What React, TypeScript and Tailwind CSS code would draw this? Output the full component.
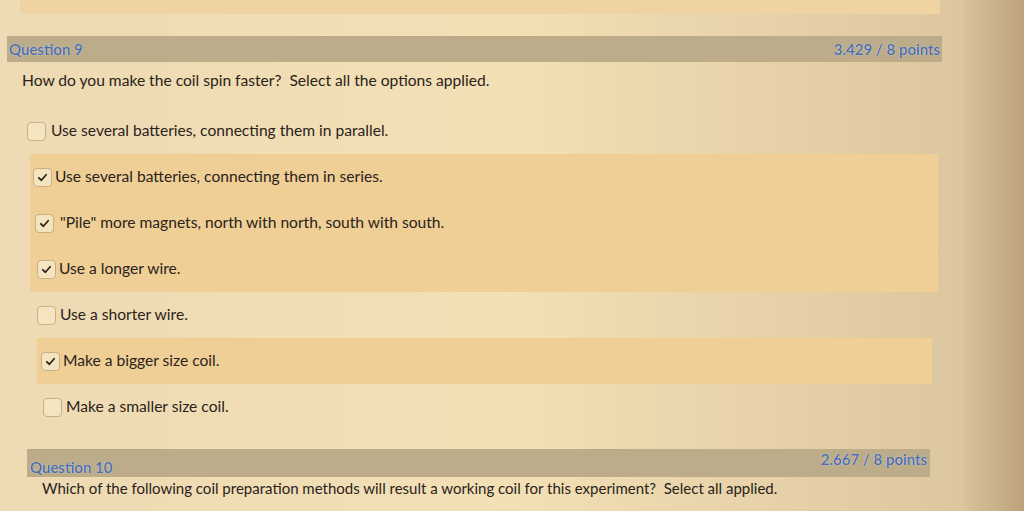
import React from "react";

const options = [
  { text: "Use several batteries, connecting them in parallel.", checked: false, pad: "pl-[27px]" },
  { text: "Use several batteries, connecting them in series.", checked: true, pad: "pl-[33px]" },
  { text: "\"Pile\" more magnets, north with north, south with south.", checked: true, pad: "pl-[35px]" },
  { text: "Use a longer wire.", checked: true, pad: "pl-[37px]" },
  { text: "Use a shorter wire.", checked: false, pad: "pl-[37px]" },
  { text: "Make a bigger size coil.", checked: true, pad: "pl-[41px]" },
  { text: "Make a smaller size coil.", checked: false, pad: "pl-[43px]" },
];

function Box({ checked }: { checked: boolean }) {
  return (
    <span className="flex h-[19px] w-[19px] shrink-0 items-center justify-center rounded-[4px] border border-[#c9ae86] bg-[#f5e4c0]">
      {checked && (
        <svg width="11" height="11" viewBox="0 0 12 12">
          <path d="M2 6.3 L4.8 9 L10 3" fill="none" stroke="#2e2418" strokeWidth="1.9" strokeLinecap="round" strokeLinejoin="round" />
        </svg>
      )}
    </span>
  );
}

function Row({ text, checked, pad, gap }: { text: string; checked: boolean; pad: string; gap: string }) {
  return (
    <div className={`flex h-[46px] items-center ${pad} ${gap}`}>
      <Box checked={checked} />
      <span className="whitespace-nowrap text-[15.6px] text-[#2a231b]">{text}</span>
    </div>
  );
}

const hdr = "text-[15px] font-semibold text-[#4a6cab] [text-shadow:0_0_1px_#e6eefa]";

export default function App() {
  return (
    <div
      className="relative h-[511px] w-[1024px] overflow-hidden bg-linear-to-r from-[#eedab3] via-[#f4e0b5] to-[#d9c39c]"
      style={{ fontFamily: "Lato, 'Open Sans', sans-serif" }}
    >
      <div className="absolute right-0 top-0 h-full w-[60px] bg-linear-to-r from-[#d9c39c] to-[#bca27c]" />
      <div className="relative flex w-[950px] flex-col">
        <div className="ml-[20px] h-[14px] w-[920px] bg-[#efd3a2]" />
        <div className="ml-[7px] mt-[22px] flex h-[26px] w-[935px] items-center justify-between bg-[#bdac8a] px-[2px]">
          <span className={hdr}>Question 9</span>
          <span className={hdr}>3.429 / 8 points</span>
        </div>
        <div className="ml-[22px] mt-[8px] h-[20px] whitespace-nowrap text-[15.6px] leading-[20px] text-[#2a231b]">
          How do you make the coil spin faster?&nbsp; Select all the options applied.
        </div>
        <div className="mt-[18px] flex flex-col">
          <Row {...options[0]} gap="gap-[5px]" />
          <div className="ml-[30px] w-[908px] bg-[#efcf96]">
            <div className="-ml-[30px]">
              <Row {...options[1]} gap="gap-[3px]" />
              <Row {...options[2]} gap="gap-[6px]" />
              <Row {...options[3]} gap="gap-[3px]" />
            </div>
          </div>
          <Row {...options[4]} gap="gap-[4px]" />
          <div className="ml-[37px] w-[895px] bg-[#efcf96]">
            <div className="-ml-[37px]">
              <Row {...options[5]} gap="gap-[3px]" />
            </div>
          </div>
          <Row {...options[6]} gap="gap-[4px]" />
        </div>
        <div className="ml-[27px] mt-[19px] flex h-[28px] w-[903px] items-center justify-between bg-[#bdac8a] px-[3px]">
          <span className={`mt-[8px] ${hdr}`}>Question 10</span>
          <span className={`-mt-[8px] ${hdr}`}>2.667 / 8 points</span>
        </div>
        <div className="ml-[42px] mt-[1px] whitespace-nowrap text-[15px] leading-[20px] text-[#2a231b]">
          Which of the following coil preparation methods will result a working coil for this experiment?&nbsp; Select all applied.
        </div>
      </div>
    </div>
  );
}
